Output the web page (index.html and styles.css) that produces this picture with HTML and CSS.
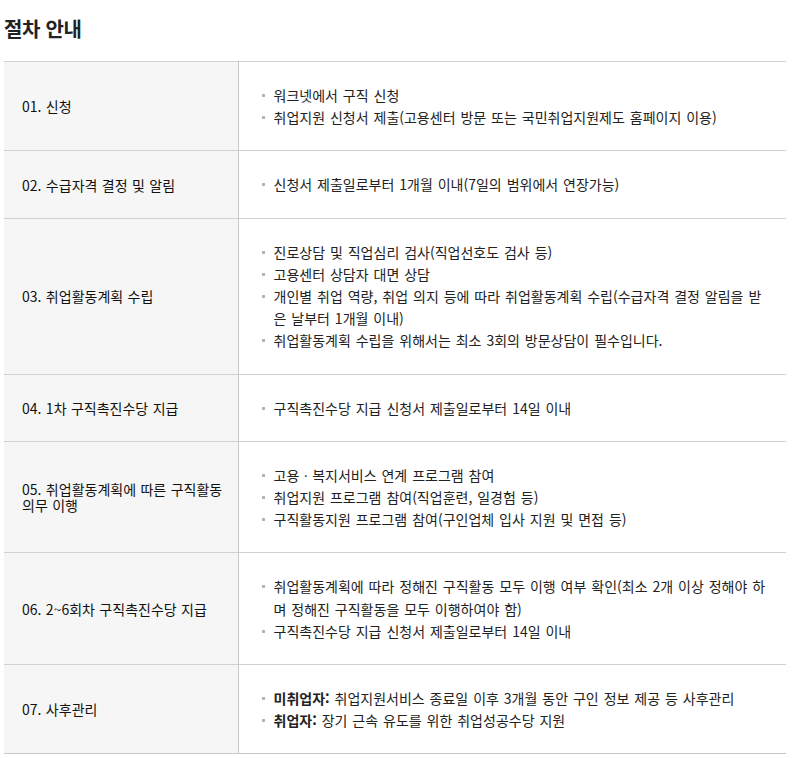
FILE: index.html
```html
<!DOCTYPE html>
<html lang="ko">
<head>
<meta charset="utf-8">
<link rel="stylesheet" href="styles.css">
</head>
<body>
<h2 class="title">절차 안내</h2>
<table class="steps">
  <tr>
    <th>01. 신청</th>
    <td><ul>
      <li>워크넷에서 구직 신청</li>
      <li>취업지원 신청서 제출(고용센터 방문 또는 국민취업지원제도 홈페이지 이용)</li>
    </ul></td>
  </tr>
  <tr>
    <th>02. 수급자격 결정 및 알림</th>
    <td><ul>
      <li>신청서 제출일로부터 1개월 이내(7일의 범위에서 연장가능)</li>
    </ul></td>
  </tr>
  <tr>
    <th>03. 취업활동계획 수립</th>
    <td><ul>
      <li>진로상담 및 직업심리 검사(직업선호도 검사 등)</li>
      <li>고용센터 상담자 대면 상담</li>
      <li>개인별 취업 역량, 취업 의지 등에 따라 취업활동계획 수립(수급자격 결정 알림을 받은 날부터 1개월 이내)</li>
      <li>취업활동계획 수립을 위해서는 최소 3회의 방문상담이 필수입니다.</li>
    </ul></td>
  </tr>
  <tr>
    <th>04. 1차 구직촉진수당 지급</th>
    <td><ul>
      <li>구직촉진수당 지급 신청서 제출일로부터 14일 이내</li>
    </ul></td>
  </tr>
  <tr>
    <th>05. 취업활동계획에 따른 구직활동 의무 이행</th>
    <td><ul>
      <li>고용ㆍ복지서비스 연계 프로그램 참여</li>
      <li>취업지원 프로그램 참여(직업훈련, 일경험 등)</li>
      <li>구직활동지원 프로그램 참여(구인업체 입사 지원 및 면접 등)</li>
    </ul></td>
  </tr>
  <tr>
    <th>06. 2~6회차 구직촉진수당 지급</th>
    <td><ul>
      <li>취업활동계획에 따라 정해진 구직활동 모두 이행 여부 확인(최소 2개 이상 정해야 하며 정해진 구직활동을 모두 이행하여야 함)</li>
      <li>구직촉진수당 지급 신청서 제출일로부터 14일 이내</li>
    </ul></td>
  </tr>
  <tr>
    <th>07. 사후관리</th>
    <td><ul>
      <li><strong>미취업자:</strong> 취업지원서비스 종료일 이후 3개월 동안 구인 정보 제공 등 사후관리</li>
      <li><strong>취업자:</strong> 장기 근속 유도를 위한 취업성공수당 지원</li>
    </ul></td>
  </tr>
</table>
</body>
</html>
```

FILE: styles.css
```css
html, body {
  margin: 0;
  padding: 0;
  background: #fff;
}
body {
  padding: 0 6px 0 4px;
  font-family: "Noto Sans CJK KR", "Noto Sans", sans-serif;
  color: #222;
}
.title {
  margin: 14px 0 18px;
  font-size: 20px;
  line-height: 29px;
  font-weight: 700;
  color: #222;
  letter-spacing: -0.3px;
}
.steps {
  width: 100%;
  border-collapse: collapse;
  border-top: 1px solid #c8c8c8;
  border-bottom: 1px solid #c8c8c8;
  font-size: 14px;
  letter-spacing: 0;
  word-spacing: 1px;
}
.steps tr {
  border-top: 1px solid #d2d2d2;
}
.steps th {
  width: 234px;
  box-sizing: border-box;
  padding: 0 10px 0 18px;
  background: #f6f6f6;
  border-right: 1px solid #c8c8c8;
  text-align: left;
  font-weight: 400;
  line-height: 16px;
  color: #111;
  letter-spacing: 0;
  word-spacing: 0.5px;
}
.steps td {
  padding: 22px 16px 22px 23px;
  vertical-align: middle;
}
.steps ul {
  margin: 0;
  padding: 0;
  list-style: none;
}
.steps li {
  position: relative;
  padding-left: 12px;
  line-height: 22.2px;
  color: #222;
}
.steps li::before {
  content: "";
  position: absolute;
  left: 0;
  top: 10px;
  width: 3px;
  height: 3px;
  background: #b4b4b4;
}
.steps strong {
  font-weight: 700;
}
```
